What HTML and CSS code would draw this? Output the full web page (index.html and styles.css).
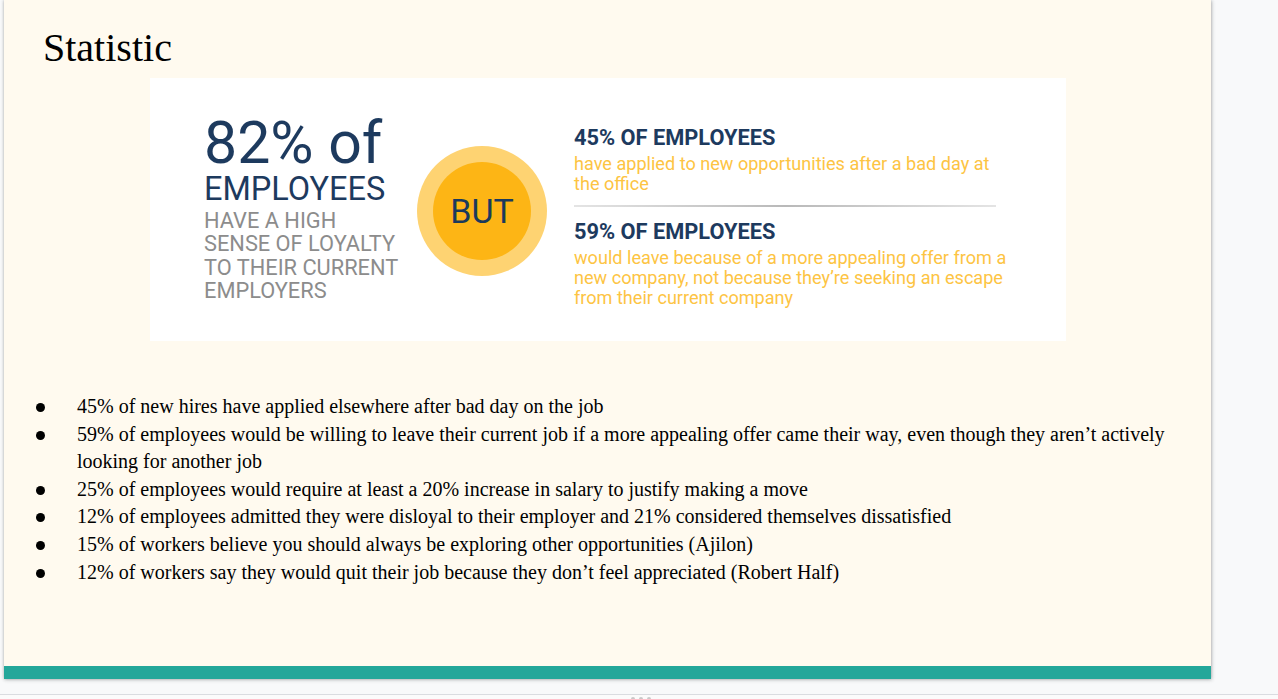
FILE: index.html
```html
<!DOCTYPE html>
<html lang="en">
<head>
<meta charset="utf-8">
<title>Statistic</title>
<link rel="stylesheet" href="styles.css">
</head>
<body>
<div class="page">
  <div class="slide">
    <h1 class="title">Statistic</h1>
    <div class="infographic">
      <div class="left">
        <div class="big">82% of</div>
        <div class="emp">EMPLOYEES</div>
        <div class="loyal">HAVE A HIGH<br>SENSE OF LOYALTY<br>TO THEIR CURRENT<br>EMPLOYERS</div>
      </div>
      <div class="circle"><div class="inner">BUT</div></div>
      <div class="right">
        <div class="head">45% OF EMPLOYEES</div>
        <div class="desc">have applied to new opportunities after a bad day at the office</div>
        <div class="rule"></div>
        <div class="head">59% OF EMPLOYEES</div>
        <div class="desc">would leave because of a more appealing offer from a new company, not because they’re seeking an escape from their current company</div>
      </div>
    </div>
    <ul class="facts">
      <li>45% of new hires have applied elsewhere after bad day on the job</li>
      <li>59% of employees would be willing to leave their current job if a more appealing offer came their way, even though they aren’t actively looking for another job</li>
      <li>25% of employees would require at least a 20% increase in salary to justify making a move</li>
      <li>12% of employees admitted they were disloyal to their employer and 21% considered themselves dissatisfied</li>
      <li>15% of workers believe you should always be exploring other opportunities (Ajilon)</li>
      <li>12% of workers say they would quit their job because they don’t feel appreciated (Robert Half)</li>
    </ul>
    <div class="bar"></div>
  </div>
  <div class="below"></div>
  <div class="footer"><span class="dot"></span><span class="dot"></span><span class="dot"></span></div>
</div>
</body>
</html>
```

FILE: styles.css
```css
html, body {
  margin: 0;
  padding: 0;
}
body {
  background: #f8f9fa;
  width: 1278px;
  height: 699px;
  overflow: hidden;
}
.page {
  display: flex;
  flex-direction: column;
  height: 699px;
}
.slide {
  margin-left: 4px;
  width: 1207px;
  height: 679px;
  flex: none;
  background: #fffaef;
  box-shadow: 0 0 3px rgba(60, 64, 67, 0.35), 1px 1px 4px rgba(60, 64, 67, 0.2);
  display: flex;
  flex-direction: column;
  font-family: "Liberation Serif", "Times New Roman", serif;
  color: #000;
}
.title {
  margin: 25px 0 0 39px;
  font-size: 40px;
  font-weight: normal;
  line-height: 46px;
  height: 46px;
}
.infographic {
  margin: 7px 0 0 146px;
  width: 916px;
  height: 263px;
  background: #fff;
  box-sizing: border-box;
  padding-left: 54px;
  display: flex;
  align-items: flex-start;
  font-family: Roboto, "Liberation Sans", sans-serif;
}
.left {
  width: 213px;
  margin-top: 37px;
  flex: none;
}
.big {
  font-size: 59px;
  line-height: 56px;
  color: #1d3a5e;
  font-weight: 400;
}
.emp {
  font-size: 32.5px;
  line-height: 36px;
  color: #1d3a5e;
}
.loyal {
  margin-top: 2px;
  font-size: 21.8px;
  line-height: 23.4px;
  color: #8c8c8c;
}
.circle {
  flex: none;
  margin-top: 68px;
  width: 130px;
  height: 130px;
  border-radius: 50%;
  background: #fed372;
  display: flex;
  align-items: center;
  justify-content: center;
}
.inner {
  width: 98px;
  height: 98px;
  border-radius: 50%;
  background: #fdb515;
  display: flex;
  align-items: center;
  justify-content: center;
  font-size: 34px;
  color: #1b3a5c;
}
.right {
  margin: 48px 0 0 27px;
  width: 445px;
  flex: none;
}
.head {
  font-size: 21.8px;
  font-weight: 700;
  line-height: 24px;
  color: #1d3a5e;
}
.desc {
  margin-top: 4px;
  font-size: 18.1px;
  line-height: 20px;
  color: #fdc443;
}
.rule {
  margin: 11px 0 13px;
  width: 422px;
  height: 2px;
  background: linear-gradient(to right, #e4e4e4, #b9b9b9 50%, #e4e4e4);
}
.facts {
  list-style: none;
  margin: 52px 16px 0 0;
  padding: 0 0 0 32px;
  font-size: 20px;
  line-height: 27.6px;
}
.facts li {
  display: flex;
  align-items: flex-start;
}
.facts li::before {
  content: "";
  flex: none;
  width: 9px;
  height: 9px;
  border-radius: 50%;
  background: #000;
  margin: 10px 32px 0 0;
}
.bar {
  margin-top: auto;
  height: 13px;
  background: #24a79a;
}
.below {
  height: 15px;
  flex: none;
  border-bottom: 1px solid #dadce0;
}
.footer {
  flex: 1;
  background: #fbfbfb;
  display: flex;
  justify-content: center;
  align-items: flex-end;
  gap: 4px;
  padding-left: 4px;
}
.dot {
  width: 4px;
  height: 2px;
  border-radius: 2px 2px 0 0;
  background: #c8c8c8;
}
```
